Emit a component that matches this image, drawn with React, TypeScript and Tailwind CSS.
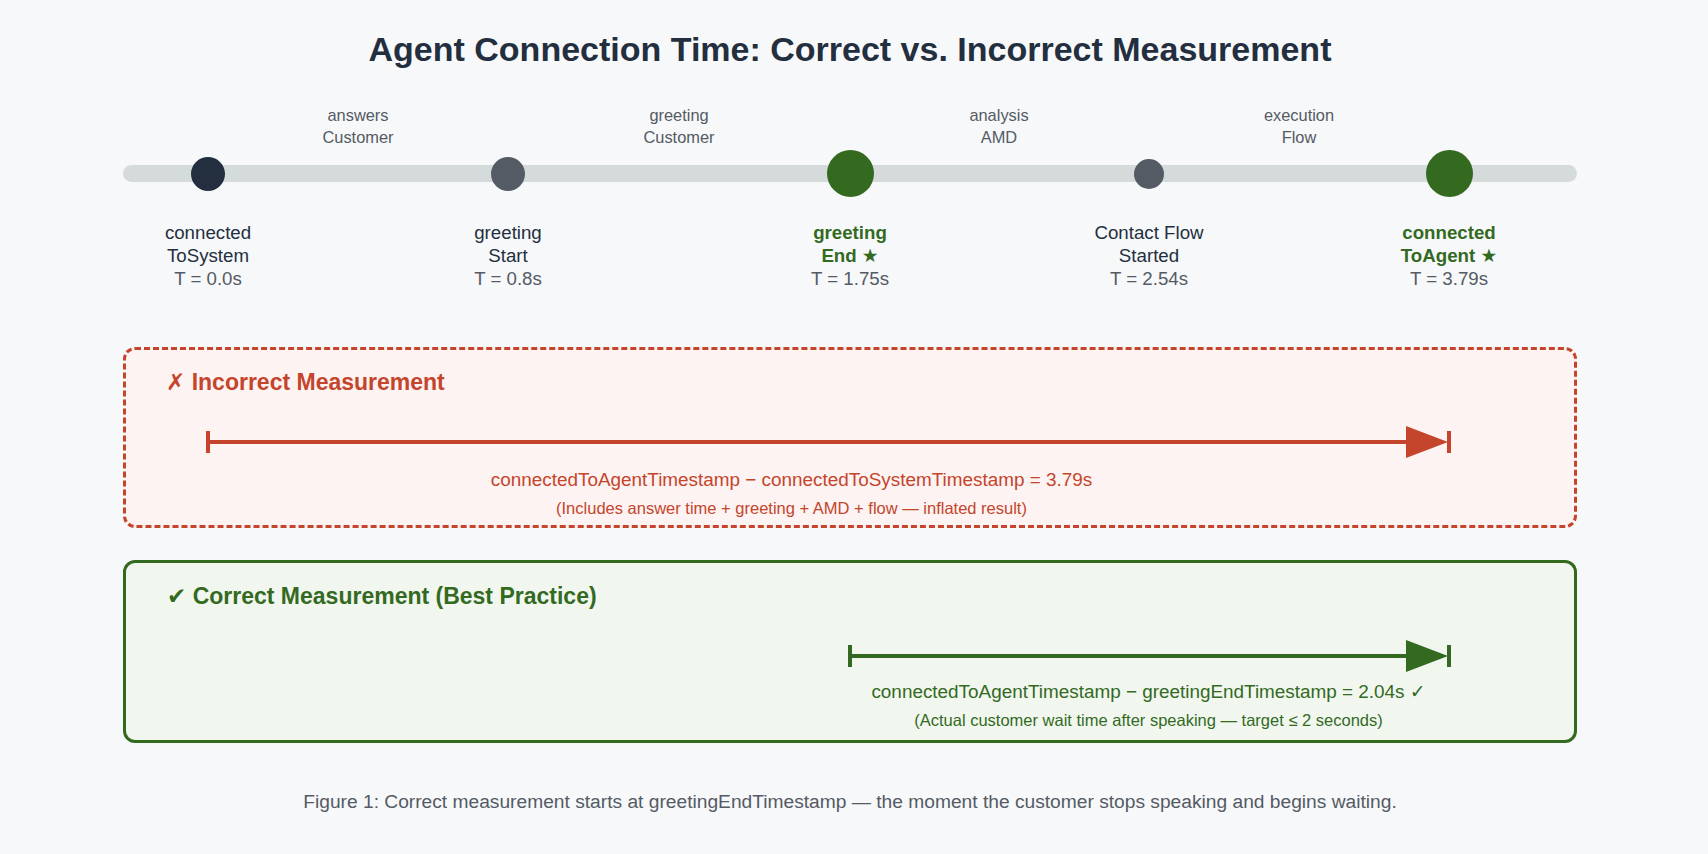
import React from "react"

const nodes = [
  { x: 85, size: 34, dot: "bg-[#232f3e]", top: "connected", bottom: "ToSystem", t: "T = 0.0s", key: false },
  { x: 385, size: 34, dot: "bg-[#545b64]", top: "greeting", bottom: "Start", t: "T = 0.8s", key: false },
  { x: 727, size: 47, dot: "bg-[#336a1f]", top: "greeting", bottom: "End ★", t: "T = 1.75s", key: true },
  { x: 1026, size: 30, dot: "bg-[#545b64]", top: "Contact Flow", bottom: "Started", t: "T = 2.54s", key: false },
  { x: 1326, size: 47, dot: "bg-[#336a1f]", top: "connected", bottom: "ToAgent ★", t: "T = 3.79s", key: true },
]

const gaps = [
  { x: 235, a: "answers", b: "Customer" },
  { x: 556, a: "greeting", b: "Customer" },
  { x: 876, a: "analysis", b: "AMD" },
  { x: 1176, a: "execution", b: "Flow" },
]

function Arrow({ width, color }: { width: number; color: string }) {
  return (
    <svg width={width} height={34} viewBox={`0 0 ${width} 34`} className="block">
      <line x1={2} y1={6} x2={2} y2={28} stroke={color} strokeWidth={4} />
      <line x1={2} y1={17} x2={width - 40} y2={17} stroke={color} strokeWidth={4} />
      <polygon points={`${width - 45},1 ${width - 3},17 ${width - 45},33`} fill={color} />
      <line x1={width - 2} y1={6} x2={width - 2} y2={28} stroke={color} strokeWidth={4} />
    </svg>
  )
}

export default function App() {
  return (
    <div className="min-h-screen w-full bg-[#f7f8fa] font-['Liberation_Sans','DejaVu_Sans',Arial,sans-serif] pt-[29px] pb-10">
      <div className="ml-[123px] w-[1454px]">
        <h1 className="text-center text-[34px] leading-[40px] font-bold text-[#232f3e]">
          Agent Connection Time: Correct vs. Incorrect Measurement
        </h1>

        {/* timeline diagram */}
        <div className="relative mt-[35px] h-[187px]">
          {gaps.map((g) => (
            <div
              key={g.x}
              className="absolute top-0 -translate-x-1/2 text-center text-[16.4px] leading-[22px] text-[#545b64] whitespace-nowrap"
              style={{ left: g.x }}
            >
              <div>{g.a}</div>
              <div>{g.b}</div>
            </div>
          ))}

          <div className="absolute left-0 right-0 top-[61px] h-[17px] rounded-full bg-[#d5dbdb]" />

          {nodes.map((n) => (
            <div key={n.x}>
              <div
                className={`absolute rounded-full ${n.dot}`}
                style={{ left: n.x - n.size / 2, top: 69.5 - n.size / 2, width: n.size, height: n.size }}
              />
              <div
                className="absolute top-[117px] -translate-x-1/2 text-center text-[18.7px] leading-[23px] whitespace-nowrap"
                style={{ left: n.x }}
              >
                <div className={n.key ? "font-bold text-[#336a1f]" : "text-[#232f3e]"}>{n.top}</div>
                <div className={n.key ? "font-bold text-[#336a1f]" : "text-[#232f3e]"}>{n.bottom}</div>
                <div className="text-[#545b64]">{n.t}</div>
              </div>
            </div>
          ))}
        </div>

        {/* incorrect */}
        <div className="mt-[56px] h-[181px] rounded-[12px] border-[3px] border-dashed border-[#c4452c] bg-[#fdf3f2] pt-[18px]">
          <div className="pl-[40px] text-[23px] leading-[28px] font-bold text-[#c4452c]">✗ Incorrect Measurement</div>
          <div className="mt-[29px] ml-[80px]">
            <Arrow width={1245} color="#c4452c" />
          </div>
          <div className="mt-[9px] w-[1331px] text-center text-[#c4452c]">
            <div className="text-[18.9px] leading-[24px]">
              connectedToAgentTimestamp − connectedToSystemTimestamp = 3.79s
            </div>
            <div className="mt-[5px] text-[16.5px] leading-[22px]">
              (Includes answer time + greeting + AMD + flow — inflated result)
            </div>
          </div>
        </div>

        {/* correct */}
        <div className="mt-[32px] h-[183px] rounded-[12px] border-[3px] border-solid border-[#336a1f] bg-[#f1f7ef] pt-[19px]">
          <div className="pl-[41px] text-[23px] leading-[28px] font-bold text-[#336a1f]">
            ✔ Correct Measurement (Best Practice)
          </div>
          <div className="mt-[29px] ml-[722px]">
            <Arrow width={603} color="#336a1f" />
          </div>
          <div className="mt-[7px] ml-[623px] w-[799px] text-center text-[#336a1f]">
            <div className="text-[18.9px] leading-[24px]">
              connectedToAgentTimestamp − greetingEndTimestamp = 2.04s ✓
            </div>
            <div className="mt-[5px] text-[16.5px] leading-[22px]">
              (Actual customer wait time after speaking — target ≤ 2 seconds)
            </div>
          </div>
        </div>

        <p className="mt-[47px] text-center text-[19.2px] leading-[24px] text-[#545b64]">
          Figure 1: Correct measurement starts at greetingEndTimestamp — the moment the customer stops speaking and begins
          waiting.
        </p>
      </div>
    </div>
  )
}
